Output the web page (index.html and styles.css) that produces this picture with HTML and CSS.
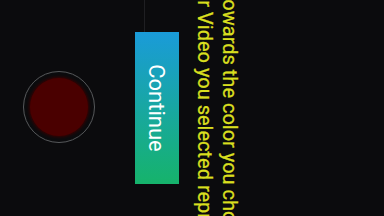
FILE: index.html
```html
<!DOCTYPE html>
<html>
<head>
<meta charset="utf-8">
<link rel="stylesheet" href="styles.css">
</head>
<body>
<div class="screen">
  <div class="message">
    <div class="line line-1">towards the color you chose</div>
    <div class="line line-2">for Video you selected represents</div>
  </div>
  <div class="action-row">
    <div class="guide"></div>
    <button class="continue">Continue</button>
  </div>
  <div class="record">
    <div class="record-dot"></div>
  </div>
</div>
</body>
</html>
```
FILE: styles.css
```css
html, body {
  margin: 0;
  padding: 0;
  width: 384px;
  height: 216px;
  overflow: hidden;
  background: #0b0b0d;
}

.screen {
  width: 216px;
  height: 384px;
  transform-origin: 0 0;
  transform: translateX(384px) rotate(90deg);
  background: #0b0b0d;
  display: flex;
  flex-direction: column;
  overflow: hidden;
  font-family: Roboto, "Noto Sans", sans-serif;
}

.message {
  margin-top: 142px;
  color: #d9df1f;
  font-size: 20px;
  line-height: 25px;
  white-space: nowrap;
  overflow: hidden;
  -webkit-text-stroke: 0.3px #d9df1f;
}

.line-1 {
  margin-left: -7px;
}

.line-2 {
  margin-left: -18px;
}

.action-row {
  display: flex;
  align-items: flex-start;
  margin-top: 13px;
  height: 44px;
}

.guide {
  width: 32px;
  height: 1px;
  margin-top: 34px;
  background: #1f1f22;
}

.continue {
  width: 152px;
  height: 44px;
  border: 0;
  padding: 0;
  margin: 0;
  background: linear-gradient(to right, #1a9bd9, #16b36b);
  color: #ffffff;
  font-family: Roboto, "Noto Sans", sans-serif;
  font-size: 22px;
}

.record {
  margin-top: 40px;
  margin-left: 71px;
  width: 72px;
  height: 72px;
  box-sizing: border-box;
  border: 1.5px solid #56585a;
  border-radius: 50%;
  display: flex;
  align-items: center;
  justify-content: center;
}

.record-dot {
  width: 58px;
  height: 58px;
  border-radius: 50%;
  background: #4a0000;
  box-shadow: 0 0 3px 1px #3a0000;
}
```
